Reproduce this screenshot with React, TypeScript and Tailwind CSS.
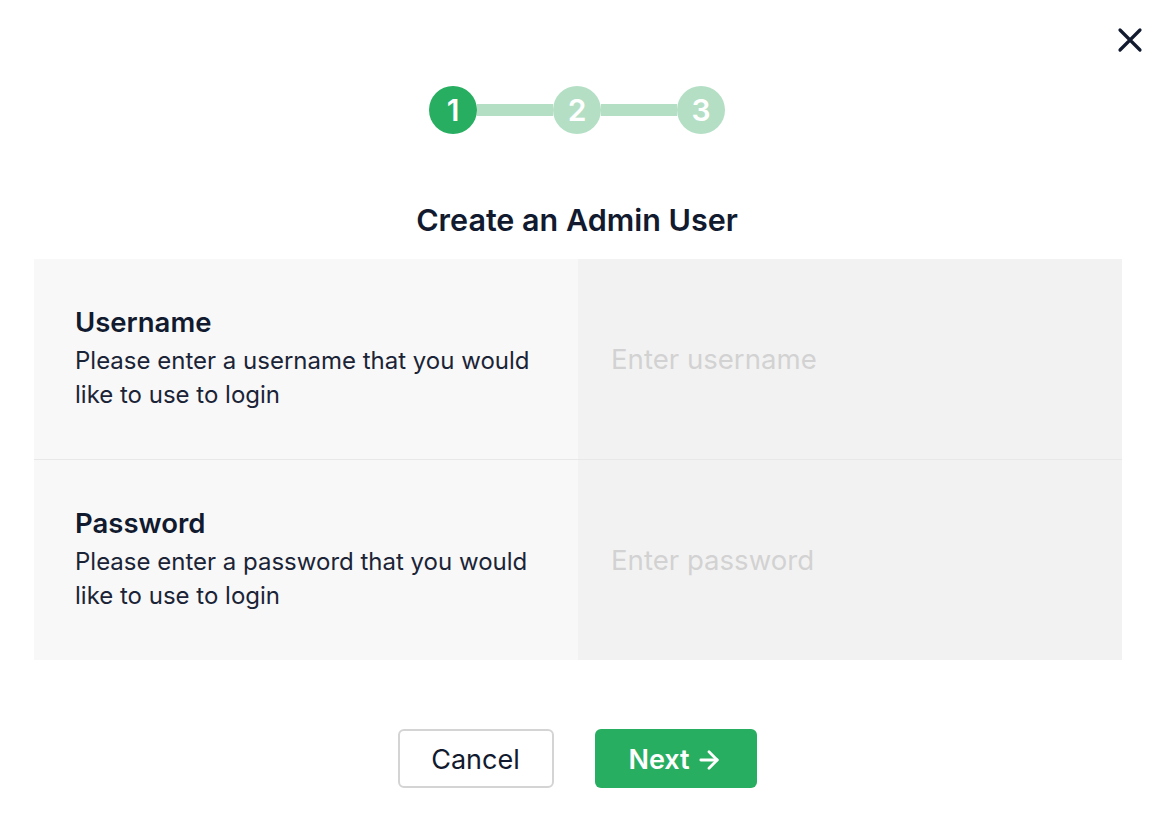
import React from "react";
import { ArrowRight } from "lucide-react";

function Step({ n, active }: { n: number; active?: boolean }) {
  return (
    <div
      className={`w-[48px] h-[48px] rounded-full flex items-center justify-center text-white text-[30px] font-semibold ${
        active ? "bg-[#27ae60]" : "bg-[#b4dfc5]"
      }`}
    >
      {n}
    </div>
  );
}

function Field({
  label,
  desc,
  placeholder,
  type,
}: {
  label: string;
  desc: string;
  placeholder: string;
  type: string;
}) {
  return (
    <div className="grid grid-cols-2 h-[200px]">
      <div className="bg-[#f8f8f8] flex flex-col justify-center pl-[41px] pr-[40px]">
        <h3 className="text-[27.5px] leading-[32px] font-semibold text-[#111a2e]">{label}</h3>
        <p className="mt-[6px] text-[24px] leading-[34px] text-[#1b2437]">{desc}</p>
      </div>
      <div className="bg-[#f2f2f2] flex items-center">
        <input
          type={type}
          placeholder={placeholder}
          className="w-full h-full bg-transparent pl-[33px] pr-6 text-[27.6px] text-[#1b2437] placeholder:text-[#d2d2d2] outline-none"
        />
      </div>
    </div>
  );
}

export default function App() {
  return (
    <div className="min-h-[818px] bg-white font-['Inter',sans-serif] text-[#111a2e]">
      <div className="h-[86px] flex justify-end items-start pt-[27px] pr-[11px]">
        <button className="w-[26px] h-[26px] flex items-center justify-center">
          <svg width="26" height="26" viewBox="0 0 26 26" fill="none">
            <path d="M3 3 L23 23 M23 3 L3 23" stroke="#111a2e" strokeWidth="3.2" strokeLinecap="round" />
          </svg>
        </button>
      </div>

      <div className="flex justify-center items-center">
        <Step n={1} active />
        <div className="w-[76px] h-[12px] bg-[#b4dfc5]" />
        <Step n={2} />
        <div className="w-[76px] h-[12px] bg-[#b4dfc5]" />
        <Step n={3} />
      </div>

      <h1 className="mt-[68px] text-center text-[30.5px] leading-[36px] font-semibold text-[#111a2e]">
        Create an Admin User
      </h1>

      <div className="mt-[21px] ml-[34px] mr-[32px]">
        <Field
          label="Username"
          desc="Please enter a username that you would like to use to login"
          placeholder="Enter username"
          type="text"
        />
        <div className="h-[1px] bg-[#e8e8e8]" />
        <Field
          label="Password"
          desc="Please enter a password that you would like to use to login"
          placeholder="Enter password"
          type="password"
        />
      </div>

      <div className="mt-[69px] flex justify-center gap-[41px]">
        <button className="w-[156px] h-[59px] pt-[3px] rounded-[6px] border-2 border-[#d4d4d4] bg-white text-[27px] text-[#111a2e]">
          Cancel
        </button>
        <button className="w-[162px] h-[59px] pt-[3px] rounded-[6px] bg-[#27ae60] text-white text-[27px] font-semibold flex items-center justify-center gap-[5px]">
          Next
          <ArrowRight size={28} strokeWidth={2.4} />
        </button>
      </div>
    </div>
  );
}
